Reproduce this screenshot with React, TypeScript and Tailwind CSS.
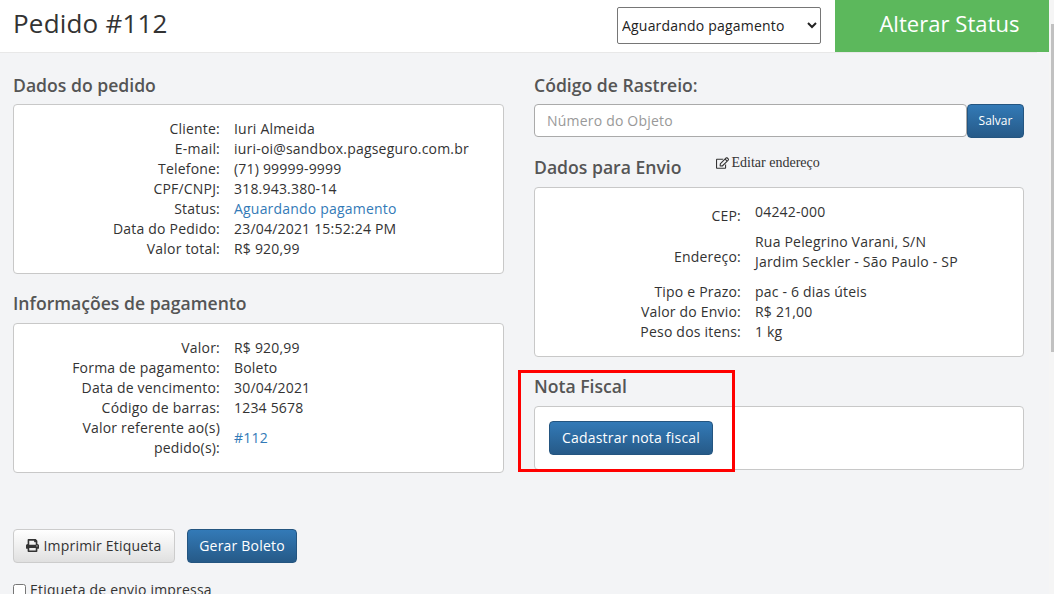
import { FaPrint, FaRegEdit } from "react-icons/fa";

const font = "font-['Open_Sans','Noto_Sans',sans-serif]";
const heading = "text-[17.6px] font-semibold leading-[24px] tracking-normal text-[#555]";

function Row({ label, value, link }: { label: string; value: string; link?: boolean }) {
  return (
    <div className="flex leading-[20px]">
      <div className="w-[206px] shrink-0 text-right text-[#333]">{label}</div>
      <div className={"ml-[14px] " + (link ? "text-[#337ab7]" : "text-[#333]")}>{value}</div>
    </div>
  );
}

const blue = "rounded-[4px] border border-[#245580] bg-gradient-to-b from-[#337ab7] to-[#265a88] text-white";

export default function App() {
  return (
    <div className={"relative h-[594px] w-[1054px] overflow-hidden bg-[#f3f4f6] text-[14px] tracking-[0.2px] " + font}>
      <header className="flex h-[52px] items-start bg-white pl-[13px]">
        <h1 className="mt-[5px] flex-1 text-[26px] font-normal leading-[36px] text-[#333]">Pedido #112</h1>
        <select className="mr-[14px] mt-[7px] h-[37px] w-[204px] rounded-[2px] border border-[#767676] bg-white text-[14px] text-[#222]">
          <option>Aguardando pagamento</option>
        </select>
        <button className="h-[52px] w-[214px] bg-[#5cb85c] pb-[6px] pl-[15px] text-[22px] tracking-[0.05px] text-white">Alterar Status</button>
        <div className="w-[5px]" />
      </header>
      <div className="flex w-[1037px] border-t border-[#e8e8e8]">
        <div className="ml-[13px] w-[491px]">
          <h2 className={"mt-[20px] " + heading}>Dados do pedido</h2>
          <section className="mt-[7px] h-[170px] rounded-[4px] border border-[#c8c8c8] bg-white pt-[14px]">
            <Row label="Cliente:" value="Iuri Almeida" />
            <Row label="E-mail:" value="iuri-oi@sandbox.pagseguro.com.br" />
            <Row label="Telefone:" value="(71) 99999-9999" />
            <Row label="CPF/CNPJ:" value="318.943.380-14" />
            <Row label="Status:" value="Aguardando pagamento" link />
            <Row label="Data do Pedido:" value="23/04/2021 15:52:24 PM" />
            <Row label="Valor total:" value="R$ 920,99" />
          </section>
          <h2 className={"mt-[17px] " + heading}>Informações de pagamento</h2>
          <section className="mt-[8px] h-[150px] rounded-[4px] border border-[#c8c8c8] bg-white pt-[14px]">
            <Row label="Valor:" value="R$ 920,99" />
            <Row label="Forma de pagamento:" value="Boleto" />
            <Row label="Data de vencimento:" value="30/04/2021" />
            <Row label="Código de barras:" value="1234 5678" />
            <div className="flex items-center leading-[20px]">
              <div className="w-[206px] shrink-0 text-right text-[#333]">Valor referente ao(s)<br />pedido(s):</div>
              <div className="ml-[14px] text-[#337ab7]">#112</div>
            </div>
          </section>
          <div className="mt-[56px] flex gap-[12px]">
            <button className="flex h-[34px] w-[162px] items-center justify-center gap-[4px] rounded-[4px] border border-[#ccc] bg-gradient-to-b from-white to-[#e0e0e0] pb-[1px] text-[#333]">
              <FaPrint className="h-[13px] w-[13px] text-[#333]" />
              Imprimir Etiqueta
            </button>
            <button className={"h-[34px] w-[110px] pb-[1px] " + blue}>Gerar Boleto</button>
          </div>
          <label className="mt-[17px] flex items-center gap-[4px] leading-[20px] text-[#333]">
            <input type="checkbox" className="h-[13px] w-[13px] appearance-auto" />
            Etiqueta de envio impressa
          </label>
        </div>
        <div className="ml-[30px] w-[490px]">
          <h2 className={"mt-[20px] " + heading}>Código de Rastreio:</h2>
          <div className="mt-[7px] flex">
            <input placeholder="Número do Objeto" className="h-[33px] w-[433px] rounded-[4px] border border-[#aaa] bg-white px-[12px] text-[14px] outline-none placeholder:text-[#999]" />
            <button className={"h-[34px] w-[57px] text-[12px] tracking-normal " + blue}>Salvar</button>
          </div>
          <div className="mt-[16px] flex items-start">
            <h2 className={"mt-[1px] " + heading}>Dados para Envio</h2>
            <span className="ml-[34px] mt-[1px] flex items-center gap-[3px] font-['Liberation_Serif',serif] text-[14px] leading-[16px] tracking-normal text-[#333]">
              <FaRegEdit className="h-[12px] w-[13px] text-[#333]" />
              Editar endereço
            </span>
          </div>
          <section className="mt-[8px] h-[170px] rounded-[4px] border border-[#c8c8c8] bg-white pt-[14px] leading-[20px] text-[#333]">
            <div className="flex"><div className="w-[206px] pt-[4px] text-right">CEP:</div><div className="ml-[14px]">04242-000</div></div>
            <div className="mt-[6px] flex items-center"><div className="w-[206px] pt-[10px] text-right">Endereço:</div><div className="ml-[14px]">Rua Pelegrino Varani, S/N<br />Jardim Seckler - São Paulo - SP</div></div>
            <div className="mt-[10px] flex"><div className="w-[206px] text-right">Tipo e Prazo:</div><div className="ml-[14px]">pac - 6 dias úteis</div></div>
            <div className="flex"><div className="w-[206px] text-right">Valor do Envio:</div><div className="ml-[14px]">R$ 21,00</div></div>
            <div className="flex"><div className="w-[206px] text-right">Peso dos itens:</div><div className="ml-[14px]">1 kg</div></div>
          </section>
          <div className="relative">
            <h2 className={"mt-[17px] " + heading}>Nota Fiscal</h2>
            <section className="mt-[8px] h-[64px] rounded-[4px] border border-[#c8c8c8] bg-white pl-[14px] pt-[14px]">
              <button className={"h-[34px] w-[164px] pb-[1px] " + blue}>Cadastrar nota fiscal</button>
            </section>
            <div className="pointer-events-none absolute left-[-16px] top-[-4px] h-[102px] w-[217px] border-[3px] border-[#ff0000]" />
          </div>
        </div>
      </div>
      <div className="absolute right-0 top-0 h-full w-[5px] bg-[#f5f5f5]">
        <div className="absolute left-[2px] top-[24px] h-[328px] w-[3px] bg-[#c1c1c1]" />
      </div>
    </div>
  );
}
